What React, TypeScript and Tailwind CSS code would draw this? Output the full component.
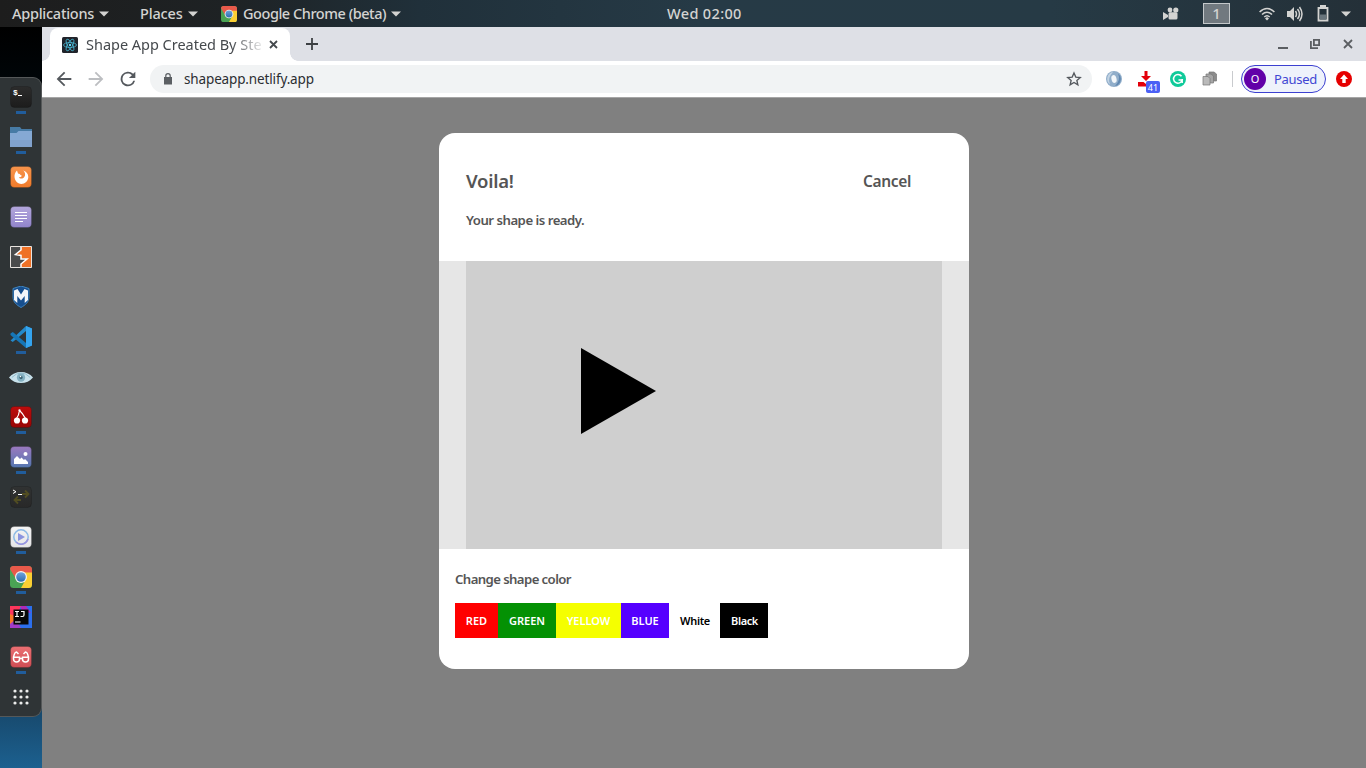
import type { ReactNode } from "react";

const Caret = ({ className = "" }: { className?: string }) => (
  <svg className={className} width="10" height="6" viewBox="0 0 10 6"><path d="M0 .5h10L5 5.5z" fill="#d3d3d1" /></svg>
);

const ChromeMark = ({ size }: { size: number }) => (
  <svg width={size} height={size} viewBox="0 0 22 22">
    <defs>
      <clipPath id={`chrome${size}`}><rect width="22" height="22" rx="3.5" /></clipPath>
      <linearGradient id={`ball${size}`} x1="0" y1="0" x2="0" y2="1"><stop stopColor="#6fa4dc" /><stop offset="1" stopColor="#2d6cb0" /></linearGradient>
    </defs>
    <g clipPath={`url(#chrome${size})`}>
      <rect width="22" height="22" fill="#4aa354" />
      <path d="M0 0h22v7H11L6 13 0 3z" fill="#e8594a" />
      <path d="M22 6.500H11L16 13 11 22h11z" fill="#fbcf33" />
    </g>
    <circle cx="11" cy="11" r="6" fill="#f4f4f2" />
    <circle cx="11" cy="11" r="4.800" fill={`url(#ball${size})`} />
  </svg>
);

function TopBar() {
  return (
    <header className="flex h-[27px] shrink-0 items-center bg-[linear-gradient(90deg,#1d1d1d_0px,#1e2224_230px,#20303a_420px,#263a46_700px,#263a45_1050px,#243038_1366px)] text-[14.5px] leading-[27px] font-medium text-[#d3d3d1]">
      <div className="flex w-[128px] items-center pl-3"><span className="w-[82px] tracking-[-0.26px] whitespace-nowrap">Applications</span><Caret className="ml-[5px]" /></div>
      <div className="flex w-[93px] items-center pl-3"><span className="w-[43px] tracking-[-0.15px] whitespace-nowrap">Places</span><Caret className="ml-[5px]" /></div>
      <div className="flex w-[446px] items-center"><ChromeMark size={16} /><span className="ml-[6px] w-[143px] tracking-[-0.46px] whitespace-nowrap">Google Chrome (beta)</span><Caret className="ml-[5px]" /></div>
      <span className="w-[80px] tracking-[0.35px] whitespace-nowrap">Wed 02:00</span>
      <div className="ml-auto flex items-center pr-[15px]">
        <svg width="16" height="14" viewBox="0 0 16 14" fill="#d3d3d1"><circle cx="7" cy="3" r="2.400" /><circle cx="12.800" cy="3" r="2.600" /><rect x="5.500" y="5.200" width="9" height="7.300" rx="1.500" /><path d="M0 5l5 3v2l-5 3z" /></svg>
        <span className="ml-6 flex h-[21px] w-[27px] items-center justify-center border border-[#c4c8ca] bg-[#71797f] text-[15px]">1</span>
        <svg className="ml-[29px]" width="16" height="14" viewBox="0 0 16 14" fill="none" stroke="#d3d3d1" strokeWidth="1.600"><path d="M.6 5Q8-2 15.400 5M3 7.500Q8 3 13 7.500M5.300 10Q8 7.500 10.700 10" /><path d="M8 10l2 1.500-2 2-2-2z" fill="#d3d3d1" stroke="none" /></svg>
        <svg className="ml-3" width="16" height="16" viewBox="0 0 16 16" fill="none" stroke="#d3d3d1" strokeWidth="1.500"><path d="M0 5h3l4-4v14l-4-4H0z" fill="#d3d3d1" stroke="none" /><path d="M8.500 5q2 3 0 6M10.500 3q4 5 0 10M12.500 1q5 7 0 14" /></svg>
        <svg className="ml-[14px]" width="12" height="17" viewBox="0 0 12 17"><path d="M3 0h6v3H3z" fill="#d3d3d1" /><path d="M1.500 3h9v12.500h-9z" fill="none" stroke="#d3d3d1" strokeWidth="1.800" /><path d="M3 9.500h6v5H3z" fill="#68747b" /></svg>
        <Caret className="ml-3" />
      </div>
    </header>
  );
}

const Tile = ({ a, b, children }: { a: string; b: string; children?: ReactNode }) => (
  <svg width="22" height="22" viewBox="0 0 22 22">
    <defs><linearGradient id={`g${a.slice(1)}`} x1="0" y1="0" x2="0" y2="1"><stop stopColor={a} /><stop offset="1" stopColor={b} /></linearGradient></defs>
    <rect x=".5" y=".5" width="21" height="21" rx="4" fill={`url(#g${a.slice(1)})`} stroke="#000" strokeOpacity=".15" />
    {children}
  </svg>
);

const dock: { icon: ReactNode; on?: boolean }[] = [
  { on: true, icon: <Tile a="#2c2c2c" b="#1c1c1c"><text x="3" y="9" fontSize="8" fontWeight="700" fontFamily="Liberation Mono, monospace" fill="#fff">$</text><path d="M8 9.500h4" stroke="#fff" /></Tile> },
  { on: true, icon: <svg width="22" height="20" viewBox="0 0 22 20"><path d="M0 0h10l1.500 2H22v6H0z" fill="#477ba5" /><path d="M0 6h6.500L8.500 4H22v16H0z" fill="#85a9d4" /><path d="M0 13h22v7H0z" fill="#7f9fca" opacity=".7" /></svg> },
  { icon: <Tile a="#f7944c" b="#f17b2b"><path d="M7 4.500C3 8 4 15 8.500 17.300c4.500 2 9.700-1 9.800-6.300 0-3-2-5.500-5-6.500 2 2 2.400 4.500 1 6.500-1.600 2.300-4.500 1.800-5.500.5 1.600 0 2.600-.6 3-1.700-1-.5-1.700-.8-2-1.700L8 7.500z" fill="#fff" /></Tile> },
  { icon: <Tile a="#b3a7dc" b="#9184cb"><path d="M5 6.500h12M5 9.500h12M5 12.500h12M5 15.500h8" stroke="#fff" strokeWidth="1.200" /></Tile> },
  { icon: <svg width="22" height="22" viewBox="0 0 22 22"><path d="M.5.500h21v21H.5z" fill="#4a4b4c" /><path d="M11 .5h10.500v21H11v-4l6-5h-6V9L6 8.500 11 4z" fill="#ef7126" /><path d="M11 1v3L5.500 8.500 11 9.500v3.500h6l-6 5v3.500" fill="none" stroke="#fff" strokeWidth="1.500" /><path d="M.5.500h21v21H.5z" fill="none" stroke="#e8e3df" /></svg> },
  { icon: <svg width="18" height="22" viewBox="0 0 18 22"><path d="M9 0l8 2.500V11c0 5-3.500 8-8 10.500C4.500 19 1 16 1 11V2.500z" fill="#174f8f" stroke="#3f83be" /><path d="M2 4.500l3.500-1.500L9 8.500 12.500 3 16 4.500V14l-3.300 3V10L9 14.500 5.300 10v7L2 14z" fill="#f4f6fa" /></svg> },
  { on: true, icon: <svg width="22" height="22" viewBox="0 0 22 22"><path d="M16 0l6 2.500v17L16 22V5L2.800 16 .5 14.500z" fill="#2489ca" /><path d="M.5 7.500L2.800 6 16 17v5L.5 9z" fill="#1676b7" /><path d="M16 0l6 2.500v17L16 22z" fill="#34a4ef" /></svg> },
  { icon: <svg width="24" height="13" viewBox="0 0 26 14"><path d="M0 7Q5 1 13 1t13 6q-5 6-13 6T0 7z" fill="#c8e2ec" /><path d="M3 7Q13-3 23 7" fill="none" stroke="#8cb8ca" /><circle cx="13" cy="7" r="4.500" fill="#83b0c1" /><circle cx="13" cy="7" r="1.800" fill="#3f6778" /><circle cx="12.500" cy="6" r=".8" fill="#fff" /></svg> },
  { on: true, icon: <Tile a="#bd0c0c" b="#980606"><path d="M6.500 12.500Q9 9 9.500 4.500Q12.500 7 15.500 12.500" fill="none" stroke="#fff" strokeWidth="1.200" /><path d="M8.500 3.500h2v1.500h-2z" fill="#fff" /><circle cx="7" cy="14.500" r="3.100" fill="#fff" /><circle cx="15" cy="14.500" r="3.100" fill="#fff" /></Tile> },
  { on: true, icon: <Tile a="#9b79bf" b="#5577b0"><path d="M4 18v-5l3-3 3 3 1.500-1.500L14 14l1-1 3 3v2z" fill="#fff" /><circle cx="15.500" cy="8" r="2" fill="#fff" /></Tile> },
  { icon: <Tile a="#303232" b="#282828"><path d="M3 4l3 1.700-3 1.800" stroke="#fff" fill="none" /><path d="M8 8.500h5" stroke="#fff" /><path d="M12 8h6M15 4.500L18.500 8 15 11.500M11 14H4.500M8 10.500L4.500 14 8 17.500" fill="none" stroke="#514d22" strokeWidth="1.800" /></Tile> },
  { on: true, icon: <Tile a="#f4f4f4" b="#e5e5e7"><circle cx="11" cy="11" r="7.200" fill="none" stroke="#8bb9e6" strokeWidth="1.500" /><path d="M8 7l7 4-7 4z" fill="#8b94df" /><path d="M6 16a7.200 7.200 0 0 0 12-3" fill="none" stroke="#9a93df" strokeWidth="1.500" /></Tile> },
  { on: true, icon: <ChromeMark size={22} /> },
  { icon: <svg width="22" height="22" viewBox="0 0 22 22"><path d="M0 0h22v22H0z" fill="#2c6fed" /><path d="M0 0h11L7 9 0 14z" fill="#fc365c" /><path d="M0 8l7 3-3 11H0z" fill="#f87727" /><path d="M0 18l6-5 5 9H0z" fill="#a13bc9" /><path d="M11 0h5l5 7-10-2z" fill="#af2ab8" /><path d="M3.500 3.500h15v15h-15z" fill="#080808" /><path d="M5 5.500h4M7 5.500v5M5 10.500h4M11 5.500h3V9q0 1.500-1.500 1.500H10.500M5 16h5.500" fill="none" stroke="#fff" strokeWidth="1.200" /></svg> },
  { on: true, icon: <Tile a="#eb7073" b="#cf4d54"><g fill="none" stroke="#fff" strokeWidth="1.500"><path d="M3.500 11.200h6v1.800a3 3 0 0 1-6 0zM12.500 11.200h6v1.800a3 3 0 0 1-6 0zM9.500 12.500h3M3.500 11.500Q4.500 6 6.500 6L8.500 8M18.500 11.500Q17.500 6 15.500 6L13.500 8" /></g></Tile> },
  { icon: <svg width="16" height="16" viewBox="0 0 16 16" fill="#ecedec">{[2, 8, 14].map((y) => [2, 8, 14].map((x) => <circle key={`${x}-${y}`} cx={x} cy={y} r="1.600" />))}</svg> },
];

function Dock() {
  return (
    <aside className="flex w-[42px] shrink-0 flex-col bg-[linear-gradient(180deg,#000_0,#000508_50px,#17476a_680px,#1c608f_741px)] pt-[50px]">
      <ul className="flex flex-col rounded-r-[9px] border-y border-r border-[#555859] bg-[#2f3436]">
        {dock.map((d, i) => (
          <li key={i} className={`relative flex items-center justify-center pl-px ${i === 0 ? "h-[39px] pb-px" : i === 15 ? "h-[39px] pt-px" : "h-10"}`}>
            {d.icon}
            {d.on && <i className={`absolute left-4 h-[3px] w-[10px] bg-[#215d9c] ${i === 0 ? "top-[33px]" : "top-[34px]"}`} />}
          </li>
        ))}
      </ul>
    </aside>
  );
}

function TabStrip() {
  return (
    <div className="flex h-[34px] items-end bg-[#dee0e6] pl-2">
      <div className="relative flex h-[33px] w-[240px] items-center rounded-t-lg bg-white pl-3">
        <i className="absolute -left-2 bottom-0 size-2 bg-[radial-gradient(circle_at_0_0,transparent_7.500px,#fff_8px)]" />
        <i className="absolute -right-2 bottom-0 size-2 bg-[radial-gradient(circle_at_100%_0,transparent_7.500px,#fff_8px)]" />
        <svg width="16" height="16" viewBox="0 0 16 16"><rect width="16" height="16" rx="1.500" fill="#20232a" /><g fill="none" stroke="#48b5d0" strokeWidth=".8"><ellipse cx="8" cy="8" rx="6.500" ry="2.500" /><ellipse cx="8" cy="8" rx="6.500" ry="2.500" transform="rotate(60 8 8)" /><ellipse cx="8" cy="8" rx="6.500" ry="2.500" transform="rotate(120 8 8)" /></g><circle cx="8" cy="8" r="1.200" fill="#61dafb" /></svg>
        <span className="ml-2 w-[176px] text-[14.500px] tracking-[-0.02px] whitespace-nowrap text-[#45494d] [mask-image:linear-gradient(90deg,#000_145px,transparent_180px)]">Shape App Created By Ste</span>
        <svg className="ml-[7px]" width="9" height="9" viewBox="0 0 9 9"><path d="M1 1l7 7M8 1L1 8" stroke="#45494d" strokeWidth="1.800" /></svg>
      </div>
      <svg className="mb-[11px] ml-4" width="12" height="12" viewBox="0 0 12 12"><path d="M6 0v12M0 6h12" stroke="#3c4043" strokeWidth="1.800" /></svg>
      <div className="mr-[13px] ml-auto flex h-[34px] items-center">
        <svg width="10" height="12" viewBox="0 0 10 12"><path d="M0 10h10" stroke="#5b5e62" strokeWidth="2" /></svg>
        <svg className="ml-[22px]" width="10" height="10" viewBox="0 0 10 10" fill="none" stroke="#5b5e62" strokeWidth="1.800"><path d="M3.900.900h5.200v5.200H3.900zM.9 2v7.100H8" /></svg>
        <svg className="ml-[23px]" width="10" height="10" viewBox="0 0 10 10"><path d="M1 1l8 8M9 1L1 9" stroke="#5b5e62" strokeWidth="1.800" /></svg>
      </div>
    </div>
  );
}

const Nav = ({ d, color }: { d: string; color: string }) => (
  <span className="flex w-8 justify-center"><svg width="22" height="22" viewBox="0 0 24 24" fill={color}><path d={d} /></svg></span>
);
const Ext = ({ children }: { children: ReactNode }) => <span className="relative flex h-8 w-8 items-center justify-center">{children}</span>;

function Toolbar() {
  return (
    <div className="flex h-[37px] items-center border-b border-[#a6a6a6] bg-white pl-[6px]">
      <Nav color="#54585d" d="M20 11H7.830l5.590-5.590L12 4l-8 8 8 8 1.410-1.410L7.830 13H20z" />
      <Nav color="#bcbec1" d="M12 4l-1.410 1.410L16.170 11H4v2h12.170l-5.580 5.590L12 20l8-8z" />
      <Nav color="#54585d" d="M17.650 6.350A8 8 0 1 0 19.730 14h-2.080A6 6 0 1 1 12 6c1.660 0 3.140.69 4.220 1.780L13 11h7V4z" />
      <div className="ml-[6px] flex h-7 w-[942px] items-center rounded-full bg-[#f1f3f4] pl-[14px]">
        <svg width="8" height="12" viewBox="0 0 8 12"><path d="M0 4h8v7.500H0z" fill="#5b5f63" /><path d="M1.800 5V2.800a2.200 2.200 0 0 1 4.400 0V5" fill="none" stroke="#5b5f63" strokeWidth="1.200" /></svg>
        <span className="ml-3 text-[13.500px] tracking-[-0.14px] whitespace-nowrap text-[#2b2e32]">shapeapp.netlify.app</span>
        <svg className="mr-[10px] ml-auto" width="16" height="16" viewBox="0 0 24 24" fill="none" stroke="#54585d" strokeWidth="2"><path d="M12 3l2.700 6.200 6.700.6-5.100 4.400 1.500 6.600L12 17.300l-5.800 3.500 1.500-6.600-5.100-4.400 6.700-.6z" /></svg>
      </div>
      <div className="ml-[6px] flex items-center">
        <Ext><svg width="16" height="16" viewBox="0 0 16 16"><circle cx="8" cy="8" r="8" fill="#91aeca" /><path d="M7 1a7 7 0 0 0-3 12.500Q1 7 7 1z" fill="#c2d3e3" /><path d="M9 15a7 7 0 0 0 3-12.500Q15 9 9 15z" fill="#6188b1" /><ellipse cx="8" cy="8" rx="2.500" ry="4" fill="#f3f7fa" transform="rotate(-15 8 8)" /></svg></Ext>
        <Ext>
          <svg width="16" height="16" viewBox="0 0 16 16" fill="#e3000b"><path d="M6.500 0h3v5h3.500L8 10 3 5h3.500zM0 11h5.500L8 13l2.500-2H16v4.500H0z" /></svg>
          <span className="absolute top-[18px] left-4 flex h-3 w-[14px] items-center justify-center rounded-[2px] bg-[#4b60f5] text-[9px] leading-none text-white">41</span>
        </Ext>
        <Ext><svg width="16" height="16" viewBox="0 0 16 16"><circle cx="8" cy="8" r="8" fill="#10ca9a" /><path d="M11.500 5.200A4.400 4.400 0 1 0 12.200 9H8.500M12.200 8v4" fill="none" stroke="#fff" strokeWidth="1.500" /></svg></Ext>
        <Ext><svg width="16" height="16" viewBox="0 0 16 16" stroke="#777" strokeWidth=".7"><path d="M7 1h5l2.500 2v7H7z" fill="#8c8c8c" /><path d="M4 3h5l2.500 2v7H4z" fill="#a5a5a5" /><path d="M1 5.500h5L8 7.500V14H1z" fill="#bababa" /></svg></Ext>
      </div>
      <i className="ml-[6px] h-4 w-px bg-[#c9cbce]" />
      <div className="ml-2 flex h-[28px] w-[85px] items-center rounded-full border border-[#3c40d0] bg-[#eef2fb] pl-[2px]">
        <span className="flex size-[22px] items-center justify-center rounded-full bg-[#6200a8] text-[11px] text-white">O</span>
        <span className="ml-[8px] pt-px text-[13px] tracking-[-0.3px] text-[#4046d3]">Paused</span>
      </div>
      <svg className="ml-[10px]" width="16" height="16" viewBox="0 0 16 16"><circle cx="8" cy="8" r="8" fill="#e60000" /><path d="M8 3.500L12 8h-2.300v4H6.300V8H4z" fill="#fff" /></svg>
    </div>
  );
}

function ShapeDialog() {
  return (
    <section className="h-[536px] w-[530px] overflow-hidden rounded-[16px] bg-white font-semibold text-[#555]">
      <div className="h-32 px-[27px] pt-[34px]">
        <div className="flex h-[29px] items-center justify-between pr-[31px]">
          <h1 className="pb-[2px] text-[18.500px] tracking-[-0.25px]">Voila!</h1>
          <button className="text-[15.500px] tracking-[-0.35px]">Cancel</button>
        </div>
        <p className="mt-[14px] text-[13.200px] leading-5 tracking-[-0.5px]">Your shape is ready.</p>
      </div>
      <div className="h-72 bg-[#e6e6e6] px-[27px]">
        <div className="h-full bg-[#cfcfcf] pt-[87px] pl-[115px]">
          <svg width="75" height="86" viewBox="0 0 75 86"><path d="M0 0l75 43L0 86z" /></svg>
        </div>
      </div>
      <div className="px-4 pt-5">
        <p className="text-[13.200px] leading-5 tracking-[-0.6px]">Change shape color</p>
        <div className="mt-[14px] flex h-[35px] text-[11px] text-white">
          <button className="w-[43px] bg-[#f00] pt-px">RED</button>
          <button className="w-[58px] bg-[#049104] pt-px">GREEN</button>
          <button className="w-[65px] bg-[#f5ff00] pt-px">YELLOW</button>
          <button className="w-[48px] bg-[#5500ff] pt-px">BLUE</button>
          <button className="w-[51px] bg-white pt-px pl-px tracking-[-0.3px] text-black">White</button>
          <button className="w-[48px] bg-black pt-px pl-px tracking-[-0.4px]">Black</button>
        </div>
      </div>
    </section>
  );
}

export default function App() {
  return (
    <div className="flex h-screen w-full flex-col overflow-hidden font-['Noto_Sans',sans-serif] [font-stretch:semi-condensed]">
      <TopBar />
      <div className="flex min-h-0 flex-1">
        <Dock />
        <div className="flex min-w-0 flex-1 flex-col">
          <TabStrip />
          <Toolbar />
          <main className="flex flex-1 items-start justify-center bg-[#808080] pt-[35px]">
            <ShapeDialog />
          </main>
        </div>
      </div>
    </div>
  );
}
